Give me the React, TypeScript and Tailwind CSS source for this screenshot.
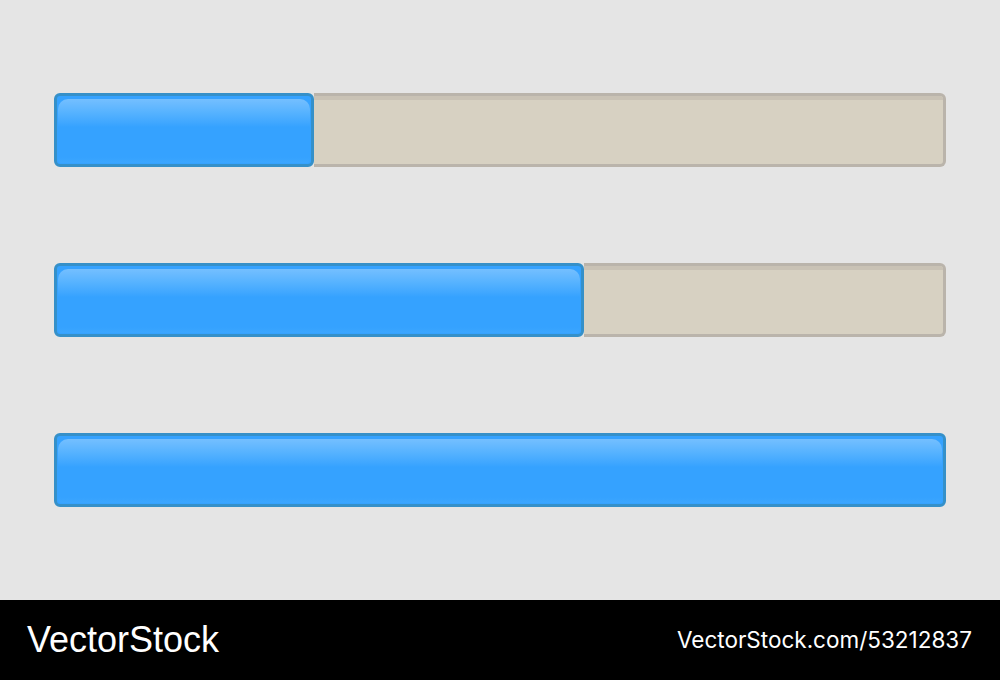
const bars = [260, 530, 892];

function ProgressBar({ fill }: { fill: number }) {
  const full = fill >= 892;
  return (
    <div className="flex h-[74px] w-[892px]">
      <div
        className="relative h-full shrink-0 overflow-hidden rounded-[6px] border-[3px] border-[#3590c9] bg-[#35a2ff]"
        style={{ width: fill }}
      >
        {/* glossy highlight on the upper half */}
        <div className="absolute left-[1px] right-[1px] top-[3px] h-[28px] rounded-t-[10px] bg-gradient-to-b from-[#74bfff] via-[#55b2ff] to-[#35a2ff]" />
        <div className="absolute inset-x-[1px] bottom-[1px] h-[6px] rounded-b-[4px] bg-gradient-to-t from-[#3ba6ff] to-[#35a2ff]" />
      </div>
      {!full && (
        <div className="relative h-full flex-1 overflow-hidden rounded-r-[6px] border-[3px] border-l-0 border-[#bab4ab] bg-[#d7d1c2]">
          <div className="h-[4px] bg-[#c9c2b5]" />
        </div>
      )}
    </div>
  );
}

export default function App() {
  return (
    <div className="flex h-[680px] w-[1000px] flex-col bg-[#e5e5e5]">
      <div className="flex flex-1 flex-col gap-[96px] pl-[54px] pt-[93px]">
        {bars.map((w, i) => (
          <ProgressBar key={i} fill={w} />
        ))}
      </div>
      <div className="flex h-[80px] items-center justify-between bg-black pl-[27px] pr-[28px] text-white">
        <span className="text-[36px] leading-none" style={{ fontFamily: '"Liberation Sans", Arial, sans-serif' }}>
          VectorStock
        </span>
        <span className="text-[22.5px] leading-none" style={{ fontFamily: 'Inter, "Liberation Sans", sans-serif' }}>
          VectorStock.com/53212837
        </span>
      </div>
    </div>
  );
}
